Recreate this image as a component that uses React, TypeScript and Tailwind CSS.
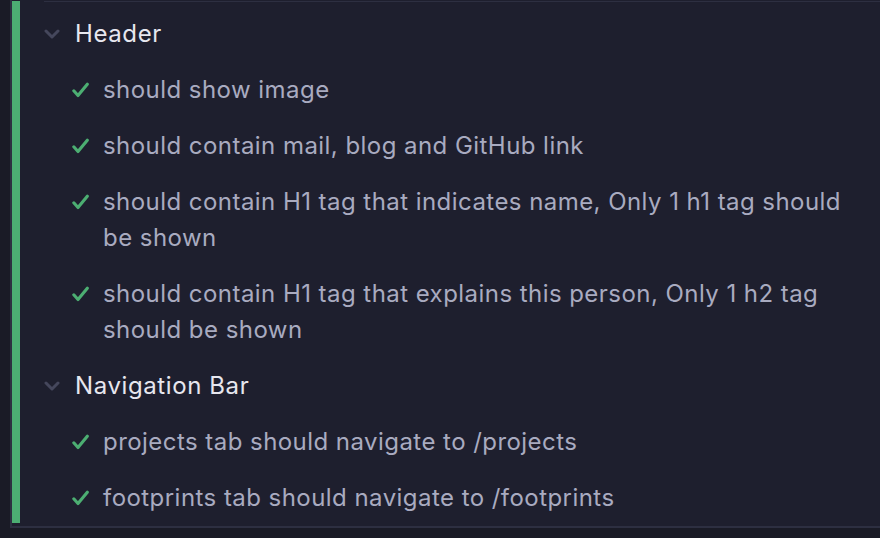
import React from 'react';

type Test = { title: string; lines?: string[] };

const suites: { name: string; tests: Test[] }[] = [
  {
    name: 'Header',
    tests: [
      { title: 'should show image' },
      { title: 'should contain mail, blog and GitHub link' },
      { title: '', lines: ['should contain H1 tag that indicates name, Only 1 h1 tag should', 'be shown'] },
      { title: '', lines: ['should contain H1 tag that explains this person, Only 1 h2 tag', 'should be shown'] },
    ],
  },
  {
    name: 'Navigation Bar',
    tests: [
      { title: 'projects tab should navigate to /projects' },
      { title: 'footprints tab should navigate to /footprints' },
    ],
  },
];

const Chevron = () => (
  <svg width="16" height="10" viewBox="0 0 16 10" fill="none" className="shrink-0">
    <path d="M2 2 L8 8 L14 2" stroke="#45475c" strokeWidth="3" strokeLinecap="round" strokeLinejoin="round" />
  </svg>
);

const Check = () => (
  <svg width="17" height="16" viewBox="0 0 17 16" fill="none" className="shrink-0">
    <path d="M1.8 8.8 L6 13.5 L15.3 2.2" stroke="#4cae72" strokeWidth="3.1" strokeLinecap="round" strokeLinejoin="round" />
  </svg>
);

export default function App() {
  return (
    <div
      className="w-[880px] h-[538px] overflow-hidden bg-[#1a1b26] flex"
      style={{ fontFamily: 'Inter, "Noto Sans", sans-serif' }}
    >
      <div className="w-[10px] shrink-0" />
      <div className="flex-1 flex flex-col">
        <div className="h-[528px] bg-[#1e1f2e] border-l-2 border-b-2 border-[#2d2f41] flex flex-col">
          <div className="h-[2px]" />
          <div className="h-[2px] ml-[32px] bg-[#2d2f41]" />
          <div className="flex flex-1">
            <div className="w-[8px] bg-[#4cad73] h-[522px]" />
            <div className="flex-1 pt-[5px] text-[24px] tracking-[0.45px]">
              {suites.map((suite) => (
                <div key={suite.name}>
                  <div className="flex items-center py-[10px] leading-[36px]">
                    <div className="w-[55px] flex justify-end pr-[15px]">
                      <Chevron />
                    </div>
                    <span className="text-[#e7e7ef] tracking-[0.6px]">{suite.name}</span>
                  </div>
                  {suite.tests.map((t, i) => (
                    <div key={i} className="flex items-start py-[10px] leading-[36px] pl-[52px]">
                      <div className="h-[36px] flex items-center pr-[14px]">
                        <Check />
                      </div>
                      <span className="text-[#a9abc0] whitespace-nowrap">
                        {t.lines
                          ? t.lines.map((l, j) => (
                              <React.Fragment key={j}>
                                {j > 0 && <br />}
                                {l}
                              </React.Fragment>
                            ))
                          : t.title}
                      </span>
                    </div>
                  ))}
                </div>
              ))}
            </div>
          </div>
        </div>
      </div>
    </div>
  );
}
